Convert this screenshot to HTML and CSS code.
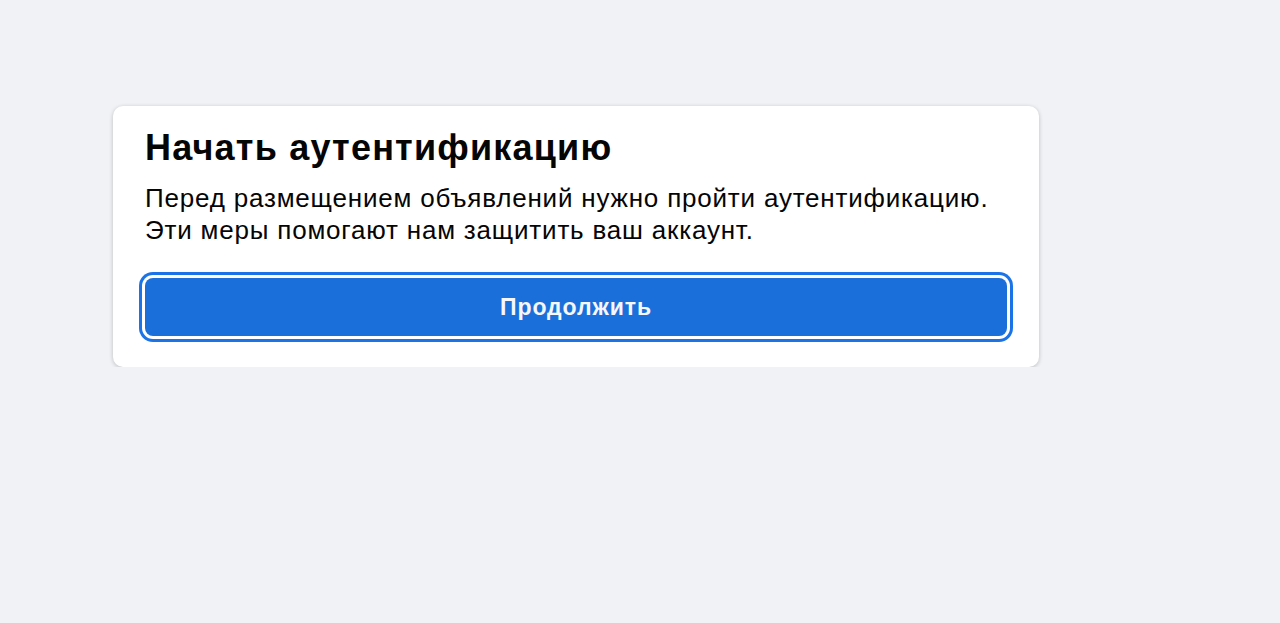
FILE: index.html
```html
<!DOCTYPE html>
<html>
<head>
    <title>Начать аутентификацию</title>
    <link rel="stylesheet" href="styles.css">
</head>
<body>
    <div class="page">
        <div class="card">
            <h1>Начать аутентификацию</h1>
            <p>Перед размещением объявлений нужно пройти аутентификацию.<br>Эти меры помогают нам защитить ваш аккаунт.</p>
            <button class="continue">Продолжить</button>
        </div>
    </div>
</body>
</html>
```

FILE: styles.css
```css
body {
    margin: 0;
    background: #f0f2f5;
    font-family: "Liberation Sans", Arial, sans-serif;
    color: #050505;
}
.page {
    padding: 106px 0 0 113px;
}
.card {
    width: 862px;
    background: white;
    border-radius: 10px;
    padding: 20px 32px 31px;
    box-shadow: 0 1px 4px rgba(0,0,0,0.22);
}
h1 {
    margin: 0;
    font-size: 36px;
    line-height: 44px;
    letter-spacing: 1.2px;
    font-weight: bold;
}
p {
    margin: 12px 0 32px;
    font-size: 26px;
    line-height: 32px;
    letter-spacing: 0.8px;
}
.continue {
    display: block;
    width: 100%;
    height: 58px;
    background: #1b6fdb;
    color: #f5f7fa;
    border: none;
    border-radius: 8px;
    font-family: inherit;
    font-size: 23px;
    letter-spacing: 0.9px;
    font-weight: bold;
    box-shadow: 0 0 0 3px white, 0 0 0 6px #1b73e8;
    cursor: pointer;
}
```
